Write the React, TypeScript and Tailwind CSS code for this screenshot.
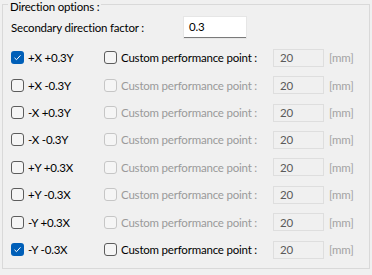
import type { ReactNode } from "react";

const rows = [
  { label: "+X +0.3Y", checked: true },
  { label: "+X -0.3Y", checked: false },
  { label: "-X +0.3Y", checked: false },
  { label: "-X -0.3Y", checked: false },
  { label: "+Y +0.3X", checked: false },
  { label: "+Y -0.3X", checked: false },
  { label: "-Y +0.3X", checked: false },
  { label: "-Y -0.3X", checked: true },
];

function Box({ checked, disabled }: { checked?: boolean; disabled?: boolean }) {
  if (checked) {
    return (
      <span className="flex h-[13px] w-[13px] shrink-0 items-center justify-center rounded-[3px] bg-[#005fb8]">
        <svg width="9" height="9" viewBox="0 0 9 9" fill="none">
          <path d="M1.5 4.8 L3.5 6.7 L7.5 2.3" stroke="white" strokeWidth="1" />
        </svg>
      </span>
    );
  }
  return (
    <span
      className={
        disabled
          ? "h-[13px] w-[13px] shrink-0 rounded-[3px] border border-[#c6c6c6] bg-[#f5f5f5]"
          : "h-[13px] w-[13px] shrink-0 rounded-[3px] border border-[#5c5c5c] bg-[#f5f5f5]"
      }
    />
  );
}

function Row({ label, checked }: { label: string; checked: boolean }): ReactNode {
  return (
    <div className="flex h-[27.43px] items-center whitespace-nowrap">
      <div className="flex w-[93px] items-center gap-[4px]">
        <Box checked={checked} />
        <span>{label}</span>
      </div>
      <div className={"flex w-[169px] items-center gap-[4px] " + (checked ? "text-black" : "text-[#9a9a9a]")}>
        <Box disabled={!checked} />
        <span>Custom performance point :</span>
      </div>
      <div className="flex h-[18px] w-[51px] items-center border border-[#dedede] bg-[#f0f0f0] pl-[6px] text-[#5a5a5a]">
        20
      </div>
      <span className="ml-[5px] text-[#a3a3a3]">[mm]</span>
    </div>
  );
}

export default function App() {
  return (
    <div className="h-[275px] w-[372px] bg-[#f0f0f0] px-[2px] pb-[2px] text-[11.5px] tracking-[-0.2px] text-black [font-family:Lato,sans-serif]">
      <fieldset className="h-[269px] border border-[#d9d9d9] pl-[8px]">
        <legend className="ml-[-3px] h-[9px] px-[2px] leading-[9px]">
          <span className="relative top-[2px]">Direction options :</span>
        </legend>
        <div className="mt-[8px] flex h-[21px] items-center whitespace-nowrap">
          <span className="w-[173px]">Secondary direction factor :</span>
          <div className="flex h-[21px] w-[62px] items-center border-b border-b-[#7a7a7a] bg-white pl-[5px] shadow-[0_0_0_1px_#e6e6e6]">
            0.3
          </div>
        </div>
        <div className="mt-[6px]">
          {rows.map((r) => (
            <Row key={r.label} label={r.label} checked={r.checked} />
          ))}
        </div>
      </fieldset>
    </div>
  );
}
